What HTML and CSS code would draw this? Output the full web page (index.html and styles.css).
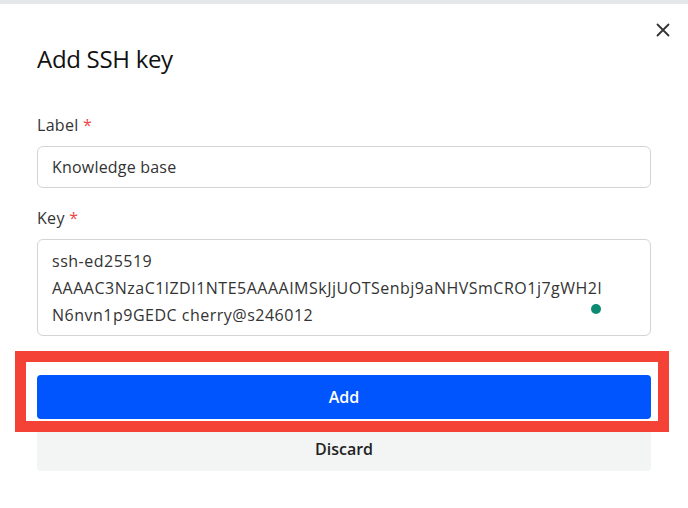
FILE: index.html
```html
<!DOCTYPE html>
<html lang="en">
<head>
<meta charset="utf-8">
<title>Add SSH key</title>
<link rel="stylesheet" href="styles.css">
</head>
<body>
<div class="topbar"></div>
<div class="modal">
  <button class="close" aria-label="Close">
    <svg width="14" height="14" viewBox="0 0 14 14"><path d="M1.5 1.5 L12.5 12.5 M12.5 1.5 L1.5 12.5" stroke="#333" stroke-width="1.8" stroke-linecap="round" fill="none"/></svg>
  </button>
  <h1 class="title">Add SSH key</h1>
  <form class="form">
    <div class="field">
      <label class="label">Label <span class="req">*</span></label>
      <input class="input" type="text" value="Knowledge base">
    </div>
    <div class="field">
      <label class="label">Key <span class="req">*</span></label>
      <div class="area-wrap">
        <textarea class="textarea">ssh-ed25519 AAAAC3NzaC1lZDI1NTE5AAAAIMSkJjUOTSenbj9aNHVSmCRO1j7gWH2lN6nvn1p9GEDC cherry@s246012</textarea>
        <span class="dot"></span>
      </div>
    </div>
    <div class="actions">
      <button type="button" class="btn btn-primary">Add</button>
      <button type="button" class="btn btn-secondary">Discard</button>
      <div class="highlight"></div>
    </div>
  </form>
</div>
</body>
</html>
```
FILE: styles.css
```css
* { box-sizing: border-box; }
html, body { margin: 0; padding: 0; background: #fff; }
body { font-family: "Open Sans", "Noto Sans", sans-serif; color: #333; width: 688px; height: 508px; overflow: hidden; }
.topbar { height: 4px; background: #e5e7eb; }
.modal { position: relative; padding: 0 37px; }
.close { position: absolute; top: 19px; right: 18px; width: 14px; height: 14px; padding: 0; border: 0; background: none; display: flex; }
.title { margin: 0; padding-top: 39px; font-size: 24px; line-height: 32px; font-weight: 400; color: #111; letter-spacing: -0.3px; }
.form { margin-top: 38px; display: flex; flex-direction: column; }
.field { display: flex; flex-direction: column; gap: 9px; margin-bottom: 18px; }
.field + .field { margin-bottom: 16px; }
.label { font-size: 16px; line-height: 24px; color: #333; letter-spacing: 0.3px; }
.req { color: #ef4444; }
.input { height: 42px; border: 1px solid #d4d4d8; border-radius: 6px; padding: 0 14px; font: inherit; font-size: 16px; letter-spacing: 0.2px; color: #333; outline: none; }
.area-wrap { position: relative; }
.textarea { display: block; width: 100%; height: 97px; border: 1px solid #d4d4d8; border-radius: 6px; padding: 8px 40px 8px 14px; font: inherit; font-size: 16px; letter-spacing: 0.5px; line-height: 27px; color: #333; resize: none; outline: none; overflow: hidden; overflow-wrap: anywhere; }
.dot { position: absolute; left: 554px; top: 65px; width: 10px; height: 10px; border-radius: 50%; background: #0c8a72; }
.actions { position: relative; margin-top: 23px; display: flex; flex-direction: column; gap: 8px; }
.btn { height: 44px; border: 0; border-radius: 4px; font: inherit; font-size: 16px; font-weight: 600; cursor: pointer; }
.btn-primary { background: #0055ff; color: #fff; }
.btn-secondary { background: #f3f4f4; color: #222; }
.highlight { position: absolute; left: -22px; top: -24px; width: 654px; height: 81px; border: 11px solid #f44336; pointer-events: none; }
```
